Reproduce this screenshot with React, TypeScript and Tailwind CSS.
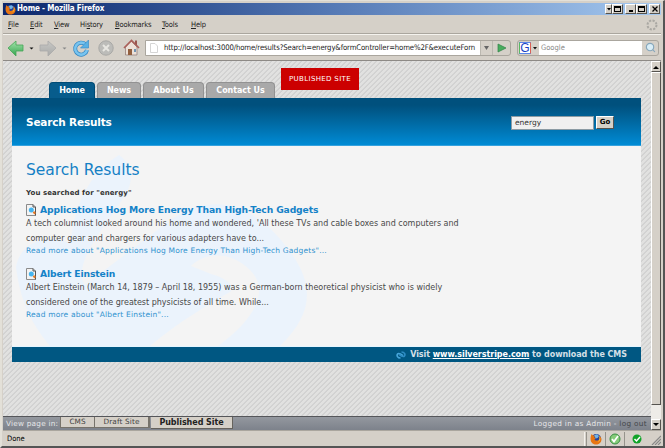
import type { ReactNode } from "react";
import { Search } from "lucide-react";

function FirefoxIcon({ className }: { className: string }) {
  return (
    <svg viewBox="0 0 12 12" className={className}>
      <circle cx="6.2" cy="6" r="5" fill="#27459b" />
      <path d="M4 2.2 7 1.3l2 1.8-1.4 2-2 .3z" fill="#70b5e8" />
      <path d="M1.6 1 3 2.6l1.8-.1-.8 1.7 1.9.9-1.4 1.1c.2 1.7 3.2 2 4.6.2.9-1.3.3-3-.4-4 2.8 1.3 3.5 4.6 1.9 6.9C8.7 12 4 12.600 1.700 9.500.100 7.300.3 3.500 1.600 1z" fill="#e87512" />
      <path d="M9.500 3.300c1.600 2.400.5 5.700-2.500 6 2.200-.8 3-2.900 2.500-6z" fill="#ffd23f" />
    </svg>
  );
}

function SearchPageIcon() {
  return (
    <svg viewBox="0 0 10 12" className="h-3 w-2.5 shrink-0">
      <path d="M.5.5H7L9.500 3v8.500h-9z" fill="#f3f3f3" stroke="#8b8b8b" />
      <path d="M7 .5V3h2.500v8.500" fill="none" stroke="#555" />
      <circle cx="5.300" cy="6" r="2.500" fill="#45b4ef" />
      <path d="m7.400 7.800 1.800 1.900" stroke="#e77a25" strokeWidth="2" />
    </svg>
  );
}

function Swirl() {
  return (
    <svg viewBox="0 0 629 200" className="absolute inset-0 h-full w-full" preserveAspectRatio="none">
      <path d="M107 9C76 28 61 62 59 98 34 86 8 97 4 121c4 32 14 55 34 79h100c30-25 56-40 80-54 6-6-4-14-19-18l-20-8c14-14 40-15 59 4 20 20 6 48-32 76h62c34-33 36-63 5-101-31-40-71-54-113-26L73 139c-16-22 30-70 43-95 6-14 2-28-9-35z" fill="#ebf3fc" />
    </svg>
  );
}

function MenuItem({ first, rest, width }: { first: ReactNode; rest: string; width: string }) {
  return <span className={width}>{first}{rest}</span>;
}

function Tab({ label, className }: { label: string; className: string }) {
  return (
    <div className={`flex h-4 items-center justify-center rounded-t-[4px] border-x border-t text-[8px] font-bold tracking-[-0.06px] text-white ${className}`}>
      {label}
    </div>
  );
}

function Result({ title, lines, more }: { title: string; lines: string[]; more: string }) {
  return (
    <article className="h-16">
      <h3 className="flex h-3 items-center gap-1">
        <SearchPageIcon />
        <a className="text-[9.200px] leading-3 font-bold tracking-[-0.12px] text-[#1482c8]">{title}</a>
      </h3>
      {lines.map((line) => (
        <p key={line} className="h-[15px] text-[8px] leading-[15px] text-[#484848]">{line}</p>
      ))}
      <a className="block h-2.5 text-[7.500px] leading-[10px] tracking-[0.19px] text-[#3092cf]">{more}</a>
    </article>
  );
}

const bevel = "border border-t-white border-l-white border-r-[#55534f] border-b-[#55534f] bg-[#d5d0c8]";

export default function App() {
  return (
    <div className="flex h-[448px] w-[665px] flex-col overflow-hidden border-t border-r-2 border-b-2 border-l-2 border-t-[#e3e0d8] border-r-[#555] border-b-[#555] border-l-[#e3e0d8] bg-[#d5d0c8] font-['DejaVu_Sans',sans-serif] whitespace-nowrap">
      <header className="mt-0.5 mr-0.5 ml-px flex h-3 shrink-0 items-center bg-linear-to-r from-[#0c266c] via-[#5579b5] to-[#a7caf0] pr-px pl-0.5 font-['DejaVu_Sans_Condensed','DejaVu_Sans',sans-serif] text-[8px] font-bold text-white">
        <FirefoxIcon className="mr-px h-[11px] w-[11px]" />
        <span className="tracking-[-0.17px]">Home - Mozilla Firefox</span>
        <div className="ml-auto flex h-[10px]">
          <span className={`flex w-[7px] items-center justify-center ${bevel}`}><svg viewBox="0 0 4 3" className="h-[3px] w-1"><path d="M0 0h4L2 2.500z" /></svg></span>
          <span className={`mr-0.5 flex w-[11px] items-center justify-center ${bevel}`}><i className="h-1.5 w-[7px] border border-t-2 border-black" /></span>
          <span className={`flex w-[11px] items-end justify-center pb-px ${bevel}`}><i className="h-0.5 w-1 bg-black" /></span>
          <span className={`mr-0.5 flex w-[11px] items-center justify-center ${bevel}`}><i className="h-1.5 w-[7px] border border-t-2 border-black" /></span>
          <span className={`flex w-[11px] items-center justify-center ${bevel}`}>
            <svg viewBox="0 0 6 6" className="h-1.5 w-1.5"><path d="m.5.5 5 5m0-5-5 5" stroke="#000" strokeWidth="1.300" /></svg>
          </span>
        </div>
      </header>
      <nav className="mr-0.5 ml-px flex h-[19px] shrink-0 items-center border-b border-[#aaa69e] pt-0.5 pl-[5px] font-['DejaVu_Sans_Condensed','DejaVu_Sans',sans-serif] text-[7.500px] tracking-[-0.15px] text-[#222]">
        <MenuItem width="w-[22px]" first={<u>F</u>} rest="ile" />
        <MenuItem width="w-6" first={<u>E</u>} rest="dit" />
        <MenuItem width="w-[26px]" first={<u>V</u>} rest="iew" />
        <MenuItem width="w-[35px]" first={<>Hi<u>s</u></>} rest="tory" />
        <MenuItem width="w-[47px]" first={<u>B</u>} rest="ookmarks" />
        <MenuItem width="w-[29px]" first={<u>T</u>} rest="ools" />
        <MenuItem width="w-6" first={<u>H</u>} rest="elp" />
        <svg viewBox="0 0 12 12" className="mr-[3px] ml-auto h-3 w-3"><circle cx="6" cy="6" r="4.500" fill="none" stroke="#aaa8a3" strokeWidth="2" strokeDasharray="2.200 1.330" /></svg>
      </nav>
      <div className="mr-0.5 ml-px flex h-[27px] shrink-0 items-center border-t border-b border-t-[#f5f3ee] border-b-[#8d8a86] pl-1 font-['DejaVu_Sans_Condensed','DejaVu_Sans',sans-serif]">
        <svg viewBox="0 0 134 20" className="h-5 w-[134px] shrink-0">
          <defs>
            <linearGradient id="green" x2="0" y2="1"><stop stopColor="#a4e4ac" /><stop offset="1" stopColor="#33a34d" /></linearGradient>
            <linearGradient id="gray" x2="0" y2="1"><stop stopColor="#c8c8c5" /><stop offset="1" stopColor="#a9aaa9" /></linearGradient>
          </defs>
          <path d="m1 10 8-7v4h7v6H9v5z" fill="url(#green)" stroke="#45a655" strokeWidth=".8" />
          <path d="M22.500 9.500h4l-2 2z" fill="#111" />
          <path d="m49 10-8-7v4h-8v6h8v5z" fill="url(#gray)" stroke="#aaa" strokeWidth=".8" />
          <path d="M55.500 9.500h4l-2 2z" fill="#888" />
          <path d="M78.500 6.500A6 6 0 1 0 80 12" fill="none" stroke="#3286c2" strokeWidth="4" />
          <path d="M78.500 6.500A6 6 0 1 0 80 12" fill="none" stroke="#78c4ef" strokeWidth="2.600" />
          <path d="M81.500 2v8h-8z" fill="#58b1e5" stroke="#3286c2" strokeWidth=".6" />
          <circle cx="99" cy="10" r="7.200" fill="#bcbcb9" stroke="#a9a9a6" />
          <path d="m96 7 6 6m0-6-6 6" stroke="#e7e6e1" strokeWidth="2" />
          <path d="M118.500 9v8h11.500V9l-6-6z" fill="#ece1d8" stroke="#8c7772" strokeWidth=".7" />
          <path d="m117 10 7.500-7.500L132 10" fill="none" stroke="#aa605a" strokeWidth="1.700" />
          <path d="M128 2.500h2v5l-2-2z" fill="#99564e" />
          <path d="M121 11h4v6h-4z" fill="#925f3e" />
          <path d="M127 11h2v3h-2z" fill="#7194b2" />
        </svg>
        <div className="ml-1 flex h-4 w-[366px] shrink-0 rounded-r-[3px] border border-[#aaa69e]">
          <div className="flex w-[334px] items-center bg-white text-[7.700px] text-[#222]">
            <svg viewBox="0 0 8 10" className="mr-[6px] ml-[4px] h-2.5 w-2 shrink-0"><path d="M.5.500H5L7.500 3v6.500h-7z" fill="#fff" stroke="#d5d5d5" /></svg>
            <span className="tracking-[-0.115px]">http://localhost:3000/home/results?Search=energy&amp;formController=home%2F&amp;executeForn</span>
          </div>
          <span className="flex w-[13px] items-center justify-center border-x border-[#bbb8b0]"><svg viewBox="0 0 5 4" className="h-1 w-[5px]"><path d="M0 0h5L2.500 4z" fill="#666" /></svg></span>
          <svg viewBox="0 0 16 14" className="h-3.5 w-4"><path d="m5 3 8 4-8 4z" fill="#49ad5e" stroke="#318248" strokeWidth=".7" /></svg>
        </div>
        <div className="ml-[6px] flex h-4 w-[142px] shrink-0 items-center rounded-[3px] border border-[#aaa69e]">
          <span className="ml-px flex h-3 w-3 items-center justify-center border border-t-[#5a86e8] border-r-[#db6154] border-b-[#5a86e8] border-l-[#5aba5f] bg-white font-['Liberation_Sans',sans-serif] text-[12px] leading-none text-[#1742c5]">G</span>
          <svg viewBox="0 0 8 6" className="h-1.5 w-2"><path d="M2 2h4L4 4.500z" fill="#111" /></svg>
          <span className="flex h-full flex-1 items-center bg-white pl-[2px] text-[7.500px] text-[#888]">Google</span>
          <span className="flex w-4 items-center justify-center"><Search className="h-[11px] w-[11px] text-[#87a7bb]" fill="#d9eef8" strokeWidth={2.5} /></span>
        </div>
      </div>
      <div className="mr-0.5 ml-px flex min-h-0 flex-1">
        <main className="flex w-[648px] flex-col bg-[repeating-linear-gradient(135deg,#e1e1e0_0px,#e1e1e0_1.500px,#cbcbcb_2.600px,#e1e1e0_3.5355px)]">
          <div className="flex h-[37px] shrink-0 items-end gap-0.5 pl-[46px]">
            <Tab label="Home" className="w-[46px] border-[#004b75] bg-[#075c8c]" />
            <Tab label="News" className="w-[44px] border-[#929292] bg-[#a9a9a9]" />
            <Tab label="About Us" className="w-[61px] border-[#929292] bg-[#a9a9a9]" />
            <Tab label="Contact Us" className="w-[69px] border-[#929292] bg-[#a9a9a9]" />
            <div className="mb-2 ml-1 flex h-[22px] w-[78px] items-center justify-center bg-[#cc0000] text-[7px] tracking-[0.35px] text-white">PUBLISHED SITE</div>
          </div>
          <section className="ml-[9px] flex h-12 w-[629px] shrink-0 items-center border-b border-[#35a2de] bg-linear-to-b from-[#00507d] from-15% to-[#008bd5] pt-0.5 pr-[27px] pl-3.5">
            <h2 className="text-[10.500px] font-bold tracking-[-0.18px] text-white">Search Results</h2>
            <div className="ml-auto flex h-3.5 w-[83px] items-center border border-[#8b9ba4] bg-[#f0f0f0] pl-[3px] text-[7.500px] text-[#333]">energy</div>
            <button className={`ml-0.5 flex h-[13px] w-[18px] items-center justify-center text-[7px] font-bold ${bevel}`}>Go</button>
          </section>
          <section className="relative ml-[9px] h-[200px] w-[629px] shrink-0 bg-[#f4f4f4] pt-3.5 pl-3.5">
            <Swirl />
            <div className="relative">
              <h1 className="h-5 text-[15.500px] leading-5 tracking-[-0.05px] text-[#1480c5]">Search Results</h1>
              <p className="mt-2 h-2.5 text-[7px] leading-[10px] font-bold tracking-[0.08px] text-[#333]">You searched for "energy"</p>
              <div className="pt-1.5">
                <Result
                  title="Applications Hog More Energy Than High-Tech Gadgets"
                  lines={["A tech columnist looked around his home and wondered, 'All these TVs and cable boxes and computers and", "computer gear and chargers for various adapters have to..."]}
                  more={'Read more about "Applications Hog More Energy Than High-Tech Gadgets"...'}
                />
                <Result
                  title="Albert Einstein"
                  lines={["Albert Einstein (March 14, 1879 – April 18, 1955) was a German-born theoretical physicist who is widely", "considered one of the greatest physicists of all time. While..."]}
                  more={'Read more about "Albert Einstein"...'}
                />
              </div>
            </div>
          </section>
          <footer className="ml-[9px] flex h-4 w-[629px] shrink-0 items-center justify-end border-t border-[#e5f5ff] bg-[#005782] pr-3.5 text-[8px] font-bold text-[#d5e0e8]">
            <svg viewBox="0 0 10 8" className="mr-1 h-2 w-2.5">
              <path d="M4.500 7C1.500 7 .300 4.500 1.700 2.900 2.800 1.600 4.200 2.400 7 4.600" fill="none" stroke="#46a6db" strokeWidth="1.600" />
              <path d="M5.500 1c3 0 4.200 2.500 2.800 4.100C7.200 6.400 5.800 5.600 3 3.400" fill="none" stroke="#2e8cc4" strokeWidth="1.600" />
            </svg>
            <span className="tracking-[-0.05px]">Visit <u className="text-white">www.silverstripe.com</u> to download the CMS</span>
          </footer>
          <div className="mt-auto flex h-[14px] items-start border-t border-[#55565a] bg-linear-to-b from-[#94989f] to-[#7d828b] text-[7.300px] text-[#e5e6e8]">
            <span className="flex h-full w-[57px] items-center pt-px pl-[3px] tracking-[0.22px]">View page in:</span>
            <span className="flex h-[11px] w-[35px] items-center justify-center border border-t-0 border-[#77736b] bg-[#d5d0c8] pt-px text-[#444]">CMS</span>
            <span className="flex h-[11px] w-[55px] items-center justify-center border-r-2 border-b border-[#77736b] bg-[#d5d0c8] pt-px tracking-[0.15px] text-[#444]">Draft Site</span>
            <span className="ml-px flex h-3 w-[82px] items-center justify-center border-r border-b border-[#66635d] bg-[#d5d0c8] text-[8px] font-bold tracking-[-0.05px] text-[#222]">Published Site</span>
            <span className="ml-auto flex h-full items-center pt-px pr-1 tracking-[0.32px]">Logged in as Admin -&nbsp;<span className="text-[#44474b]">log out</span></span>
          </div>
        </main>
        <aside className="flex w-2.5 flex-col bg-[#eeece8]">
          <div className={`flex h-[11px] items-center justify-center ${bevel}`}><svg viewBox="0 0 6 4" className="h-1 w-1.5"><path d="m0 4 3-3 3 3z" /></svg></div>
          <div className={`h-[333px] ${bevel}`} />
          <div className={`mt-auto flex h-[11px] items-center justify-center ${bevel}`}><svg viewBox="0 0 6 4" className="h-1 w-1.5"><path d="m0 0 3 3 3-3z" /></svg></div>
        </aside>
      </div>
      <div className="mr-0.5 ml-px flex h-4 shrink-0 items-center gap-px border-t border-[#aaa69e] font-['DejaVu_Sans_Condensed','DejaVu_Sans',sans-serif] text-[7.500px]">
        <span className="flex h-3.5 flex-1 items-center border-r border-[#f3f1ed] pl-1">Done</span>
        <span className="flex h-3.5 w-[18px] items-center justify-center border-l border-[#96938c]"><FirefoxIcon className="h-3 w-3" /></span>
        <span className="flex h-3.5 w-[18px] items-center justify-center border-l border-[#96938c]"><svg viewBox="0 0 12 12" className="h-3 w-3"><circle cx="6" cy="6" r="5" fill="#85cb79" stroke="#399044" /><path d="m3 6 2 2.500L9 3" fill="none" stroke="#fff" strokeWidth="1.700" /></svg></span>
        <span className="flex h-3.5 w-6 items-center justify-center border-l border-[#96938c]"><svg viewBox="0 0 10 10" className="h-2.5 w-2.5"><circle cx="5" cy="5" r="4.500" fill="#11a329" /><path d="m2.500 5 2 2 3.500-4" fill="none" stroke="#fff" strokeWidth="1.500" /></svg></span>
        <svg viewBox="0 0 12 12" className="h-3 w-3"><path d="m3 12 9-9m-6 9 6-6m-3 6 3-3" stroke="#888" strokeWidth="1.200" /></svg>
      </div>
    </div>
  );
}
